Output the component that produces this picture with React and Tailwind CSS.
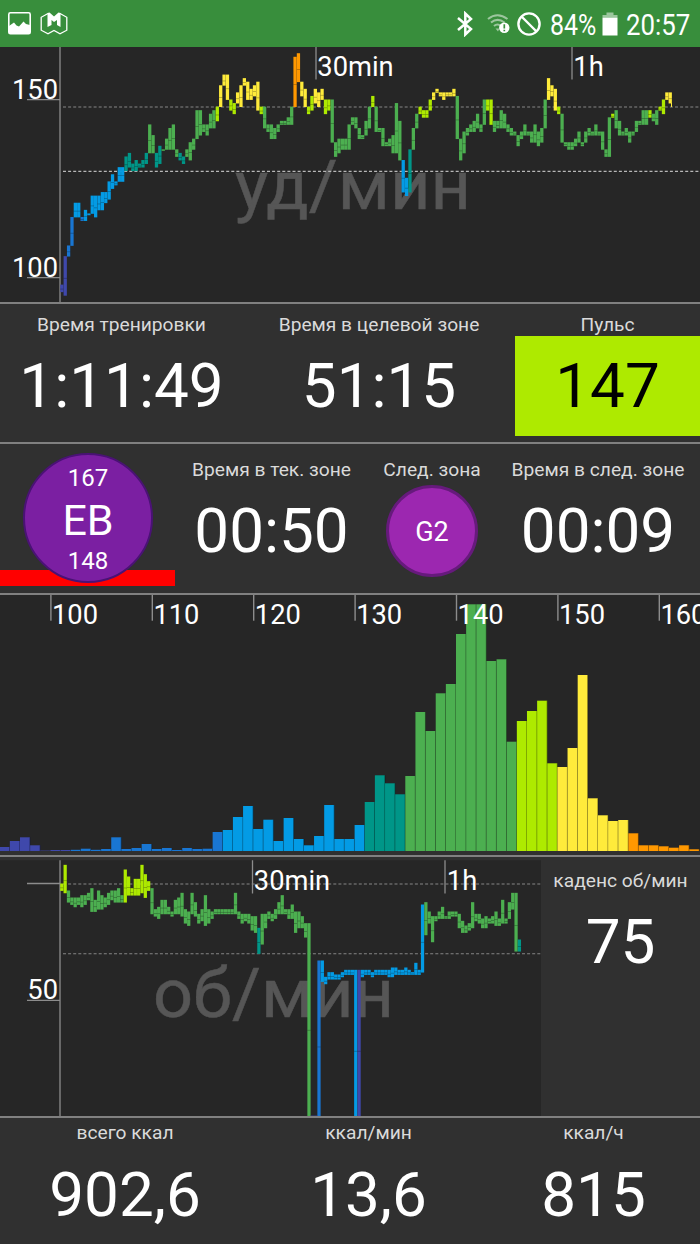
import { clsx } from 'clsx'

const COLORS = {
  i: '#3f48ab',
  b: '#1976d2',
  l: '#039be5',
  t: '#009688',
  g: '#4caf50',
  m: '#aeea00',
  y: '#ffeb3b',
  o: '#ff9800',
}

// Each sample is zone + max-min, one per chart column
const HR = `
i98-96 i106-95 b109-106 b117-109 l121-117 l121-117 b117-116 l119-116 l118-117.6 l123-118
l123-117 l123-119 l124-119 l124-121 l127-122 l129-125 l127-126 l131-127 l131-127 t134-130
t135-131 t132-130 t133-130 t132-131 t133-131 t135-132 g143-135 g140-135 t135-131 t137-132
g136-135.7 g139-136 g142-136 g143-136 g136-134 t135-133 t134-132 g136-134 g138-133 g139-136
g147-139 g147-140 g143-141 g143-140 g146-142 g147-142 m148-144 y154-148 y157-154 y157-150
m150-147 m149-146 y152-149 y154-148 y156-154 y155-150 y153-150 y154-151 y155-147 m148-146
g148-142 g143-141 g143-139 g142-139 g143-141 g144-143 g144-143 g145-143 g148-143 o162-148
o163-155 y155-151 y153-148 m148-146 m151-147 y153-149 y152-148 y153-150 m150-146 m150-147
g150-138 g138-134 g139-135 g139-136 g139-136 g143-136 g145-143 g145-142 g142-139 g140-139
g144-140 g148-142 m151-148 g148-141 g142-141 g142-137 g138-137 g139-137 g140-135 g149-135
g144-133 l133-124 l128-123 t136-124 g142-136 g146-142 m148-146 m147-145 m147-145 m150-147
y152-150 y153-152 y152-151 y152-150 y152-151 y152-151 y153-151 g151-139 g139-133 g141-135
g142-140 g143-141 g144-141 g146-142 g143-141 g150-143 m150-147 m150-143 g144-141 g144-142
g147-142 g146-142 g143-141 g142-140 g141-140 g140-137 g141-139 g143-140 g141-140 g141-138
g143-138 g141-137 g142-138 g150-142 y156-150 y154-151 y153-147 m148-146 g146-138 g138-137
g138-136 g138-136 g139-137 g141-138 g138-137 g141-138 g142-140 g141-140 g143-140 g141-140
g141-136 g136-134 g145-134 m146-145 g147-142 g144-140 g141-140 g142-140 g141-138 g141-140
g144-141 g144-143 g147-143 g147-143 m147-145 g146-144 g147-143 m148-147 m150-146 y152-150
y152-149`

const CADENCE = `
m100-97 m108-96 g97-92 g94-91 g94-90 g94-91 g95-90 g95-91 g96-93 g98-88
g93-88 g97-89 g95-89 g94-90 g96-91 g97-93 g97-92 g98-92 g95-92 m106-92
m103-95 m98-95 m102-95 m102-95 m108-96 m104-94 m101-97 g98-87 g89-86 g90-85
g93-87 g93-87 g90-87 g88-86 g93-87 g94-87 g96-86 g89-83 g88-82 g96-87
g92-86 g87-83 g89-84 g95-82 g89-83 g88-85 g89-87 g89-87 g89-87 g89-87
g89-87 g89-87 g96-87 g88-85 g87-83 g87-84 g87-83 g86-80 g86-79 t81-70
g87-74 g87-81 g88-85 g87-84 g89-85 g92-87 g95-87 g89-87 g89-85 g91-85
g88-79 g88-81 g86-81 g83-77 g83-0 i0.5-0 i0.5-0 b67-0 l67-58 l60-57
l62-59 l62-59 l61-59 l61-59 l62-60 l63-61 l63-61 l63-61 l63-0 i63-0
l63-60 l63-61 l63-61 l62-60 l63-61 l63-61 l63-61 l63-61 l63-60 l64-60
l64-61 l63-61 l63-61 l64-61 l63-61 l62-61 l66-61 l63-61 l91-62 g92-78
g88-83 g86-75 g86-84 g88-85 g90-85 g86-85 g88-85 g88-86 g88-86 g87-81
g84-79 g82-79 g83-80 g92-81 g87-84 g87-83 g85-81 g86-81 g85-83 g86-83
g88-82 g85-82 g93-83 g85-83 g92-85 g96-89 g96-71 t76-71`

// Histogram bar heights, starting at 95 bpm
const HISTOGRAM = [
  ['i', [4, 10, 13.7, 5.7, 0.4, 1, 1]],
  ['b', [1.2, 2.3, 1.2, 2, 13.7, 2, 3, 7, 2, 3, 1, 3, 2, 2.3, 19]],
  ['l', [21, 34, 45, 22, 31.3, 10, 33, 12, 5.7, 15, 46, 12, 12, 26]],
  ['t', [49, 75.7, 67.7, 56.7]],
  ['g', [75, 139, 120, 157.7, 167, 217, 246.7, 246.7, 190, 191.7, 109.3]],
  ['m', [130, 140, 150.3, 87.7]],
  ['y', [84, 103, 176, 52.7, 35.7, 30, 31]],
  ['o', [17.7, 5.7, 5.7, 4.7, 3.3, 5.7, 1.7]],
]

const parse = (text) =>
  text.trim().split(/\s+/).map((s) => {
    const [max, min] = s.slice(1).split('-').map(Number)
    return { color: COLORS[s[0]], max, min }
  })

const hrSamples = parse(HR)
const cadenceSamples = parse(CADENCE)
const bins = HISTOGRAM.flatMap(([zone, heights]) => heights.map((h) => ({ color: COLORS[zone], h })))

const hrY = (v) => 52.7 + (150 - v) * 3.56
const cadenceY = (v) => 260 - v * 2.333

function Samples({ data, x0, step, y }) {
  return data.map((s, i) => {
    const top = y(s.max) - 0.2
    const height = y(s.min) - top + 0.2
    const x = x0 + i * step
    return (
      <g key={i}>
        <rect x={x} y={top} width={step - 0.1} height={height} fill={s.color} />
        {height > 2 && (
          <rect x={x} y={top + height * 0.55} width={step} height="0.6" fill="#000" opacity="0.4" />
        )}
      </g>
    )
  })
}

function Label({ x, y, children, end }) {
  return (
    <text x={x} y={y} fontSize="27.3" fill="#fff" textAnchor={end ? 'end' : 'start'}>{children}</text>
  )
}

function Watermark({ x, y, width, children }) {
  return (
    <text
      x={x} y={y} fontSize="68" textLength={width} lengthAdjust="spacingAndGlyphs"
      fill="#565656" stroke="#565656" strokeWidth="0.5"
    >
      {children}
    </text>
  )
}

function Dashed({ y, x2, bright }) {
  return (
    <line x1="63" x2={x2} y1={y} y2={y} stroke={bright ? '#b8b8b8' : '#858585'} strokeWidth="1.1" strokeDasharray="3 2.1" />
  )
}

function HeartRateChart() {
  return (
    <svg width="700" height="255" viewBox="0 0 700 255" className="block bg-[#262626]">
      <Watermark x={235} y={162} width={236}>уд/мин</Watermark>
      <Dashed y={60} x2={700} />
      <Dashed y={124.4} x2={700} bright />
      <path d="M60 0V255M27 52.7H60M27 230.7H60M316 0V32.5M572 0V32.5" stroke="#8c8c8c" strokeWidth="1.3" />
      <Samples data={hrSamples} x0={60.2} step={3.38} y={hrY} />
      <rect x="671" y="56" width="1" height="4" fill="#ffeb3b" />
      <Label x={58} y={51.5} end>150</Label>
      <Label x={58} y={229.5} end>100</Label>
      <Label x={317.3} y={29}>30min</Label>
      <Label x={573.3} y={29}>1h</Label>
    </svg>
  )
}

function Histogram() {
  return (
    <svg width="700" height="260" viewBox="0 0 700 260" className="block bg-[#262626]">
      {bins.map((b, i) => (
        <g key={i}>
          <rect x={-0.3 + i * 10.14} y={256 - b.h} width="10.14" height={b.h} fill={b.color} />
          <rect x={9.2 + i * 10.14} y={256 - b.h} width="1" height={b.h} fill="#000" opacity="0.4" />
        </g>
      ))}
      <rect y="256" width="700" height="4" fill="#303030" />
      {[100, 110, 120, 130, 140, 150, 160].map((v, i) => (
        <g key={v}>
          <rect x={50.2 + i * 101.4} width="1.4" height="25.7" fill="#8c8c8c" />
          <Label x={52 + i * 101.4} y={29}>{v}</Label>
        </g>
      ))}
    </svg>
  )
}

function CadenceChart() {
  return (
    <svg width="541" height="259" viewBox="0 0 541 259" className="block">
      <rect y="3.3" width="541" height="256" fill="#262626" />
      <Watermark x={153} y={160} width={241}>об/мин</Watermark>
      <Dashed y={27} x2={541} />
      <Dashed y={96.8} x2={541} />
      <path d="M60 3.3V259M27 26.5H60M27 143.4H60M252.5 3.3V36.5M445 3.3V36.5" stroke="#8c8c8c" strokeWidth="1.3" />
      <Samples data={cadenceSamples} x0={60.2} step={3.34} y={cadenceY} />
      <Label x={58} y={141.5} end>50</Label>
      <Label x={253.8} y={33}>30min</Label>
      <Label x={446.8} y={33}>1h</Label>
    </svg>
  )
}

function Caption({ children }) {
  return <div className="h-5 text-[19.2px] leading-5 text-[#dadada] whitespace-nowrap">{children}</div>
}

function Metric({ label, value, className, gap = 'mt-5' }) {
  return (
    <div className={clsx('flex flex-col items-center shrink-0', className)}>
      <Caption>{label}</Caption>
      <div className={clsx('text-[62px] leading-[62px] text-white whitespace-nowrap', gap)}>{value}</div>
    </div>
  )
}

function StatusBar() {
  return (
    <header className="h-[47px] shrink-0 bg-[#388e3c] text-white flex items-center pl-2 pr-[10px]">
      <svg width="23" height="23" viewBox="0 0 23 23" className="block">
        <rect x="0.8" y="0.8" width="21.4" height="21" rx="1.6" fill="none" stroke="currentColor" strokeWidth="1.6" />
        <path d="M1 14L6 10.5L8.5 13.5L11 14.5L15.5 9.5L18 12L22 13V22H1Z" fill="currentColor" />
      </svg>
      <svg width="28" height="23" viewBox="0 0 28 23" className="block ml-[9px]">
        <path d="M8 1.5L1.2 5.3V18.2L8 21.8L14 18.4L20 21.8L26.8 18.2V5.3L20 1.5" fill="none" stroke="currentColor" strokeWidth="1.3" />
        <path d="M7.5 1L9.5 0.5L14 4.5L18.5 0.5L20.5 1V15L17 13V8L14 10L11.5 8V13L7.5 15Z" fill="currentColor" />
      </svg>

      <div className="ml-auto flex items-center">
        <svg width="18" height="26" viewBox="0 0 18 26" fill="none" stroke="currentColor" strokeWidth="2.5" className="block">
          <path d="M2 7L15 18L9.3 23.5V2.5L15 8L2 19" />
        </svg>
        <svg width="24" height="24" viewBox="0 0 24 24" className="block ml-[13px]">
          <g fill="none" stroke="currentColor" strokeWidth="2.1" opacity="0.5">
            <path d="M1 7Q10.5 -0.5 20.5 7" />
            <path d="M4 10.5Q10.5 5.3 17.5 10.5" />
            <path d="M7 14Q10.5 11 14 14" />
          </g>
          <path d="M8.5 16.5H12.5L11 19.5Z" fill="currentColor" opacity="0.5" />
          <circle cx="17.3" cy="15.8" r="5.2" fill="currentColor" />
          <path d="M17.3 12.3V16.6M17.3 17.7V19.3" stroke="#388e3c" strokeWidth="1.7" />
        </svg>
        <svg width="24" height="24" viewBox="0 0 24 24" fill="none" stroke="currentColor" strokeWidth="2.4" className="block ml-[6px]">
          <circle cx="12" cy="12" r="10.6" />
          <path d="M4.5 4.5L19.5 19.5" />
        </svg>
        <div className="w-[46px] ml-[9px] pt-[2px] text-[29px] leading-[30px]">
          <span className="inline-block origin-left scale-x-[0.86]">84%</span>
        </div>
        <svg width="16" height="24" viewBox="0 0 16 24" className="block ml-[6px]">
          <path d="M4.5 0.5H11.5V3H15.5V6H0.5V3H4.5Z" fill="currentColor" opacity="0.5" />
          <rect x="0.5" y="5.8" width="15" height="17.7" fill="currentColor" />
        </svg>
        <div className="w-[64px] ml-[8px] pt-[2px] text-[29px] leading-[30px]">
          <span className="inline-block origin-left scale-x-[0.89]">20:57</span>
        </div>
      </div>
    </header>
  )
}

export default function App() {
  return (
    <div className="w-[700px] h-[1244px] overflow-hidden flex flex-col bg-[#303030] font-[Roboto,sans-serif]">
      <StatusBar />

      <section className="h-[257px] shrink-0 border-b-2 border-[#808080]">
        <HeartRateChart />
      </section>

      <section className="h-[140px] shrink-0 border-b-2 border-[#808080] flex pt-[11px]">
        <Metric className="w-[243px]" label="Время тренировки" value="1:11:49" />
        <Metric className="w-[272px]" label="Время в целевой зоне" value="51:15" />
        <div className="w-[185px] flex flex-col items-center">
          <Caption>Пульс</Caption>
          <div className="w-full h-[100px] mt-[1px] bg-[#aeea00] text-black text-[62px] leading-[100px] text-center">147</div>
        </div>
      </section>

      <section className="h-[151px] shrink-0 border-b-2 border-[#808080] flex">
        <div className="relative w-[175px] shrink-0 flex justify-center pt-[9px]">
          <div className="absolute left-0 bottom-[7px] w-full h-4 bg-[#ff0000]" />
          <div className="relative w-[130px] h-[130px] rounded-full bg-[#7b1fa2] border-2 border-[#4a1275] text-white flex flex-col items-center pt-[9px] pl-px">
            <span className="text-[24px] leading-7">167</span>
            <span className="text-[43px] leading-[56px]">EB</span>
            <span className="text-[24px] leading-[26px]">148</span>
          </div>
        </div>
        <Metric className="w-[193px] pt-[16px]" label="Время в тек. зоне" value="00:50" />
        <div className="w-[128px] shrink-0 pt-[16px] flex flex-col items-center">
          <Caption>След. зона</Caption>
          <div className="w-[92px] h-[92px] mt-[5px] rounded-full bg-[#9c27b0] border-[3px] border-[#661a7c] text-white text-[27px] pt-[2px] flex items-center justify-center">
            G2
          </div>
        </div>
        <Metric className="w-[204px] pt-[16px]" label="Время в след. зоне" value="00:09" />
      </section>

      <section className="h-[262px] shrink-0 border-b-2 border-[#808080]">
        <Histogram />
      </section>

      <section className="h-[261px] shrink-0 border-b-2 border-[#808080] flex">
        <CadenceChart />
        <Metric className="w-[159px] pt-[14px]" label="каденс об/мин" value="75" />
      </section>

      <section className="flex-1 flex pt-[5px]">
        <Metric className="w-[250px]" label="всего ккал" value="902,6" gap="mt-[21px]" />
        <Metric className="w-[237px]" label="ккал/мин" value="13,6" gap="mt-[21px]" />
        <Metric className="w-[213px]" label="ккал/ч" value="815" gap="mt-[21px]" />
      </section>
    </div>
  )
}
